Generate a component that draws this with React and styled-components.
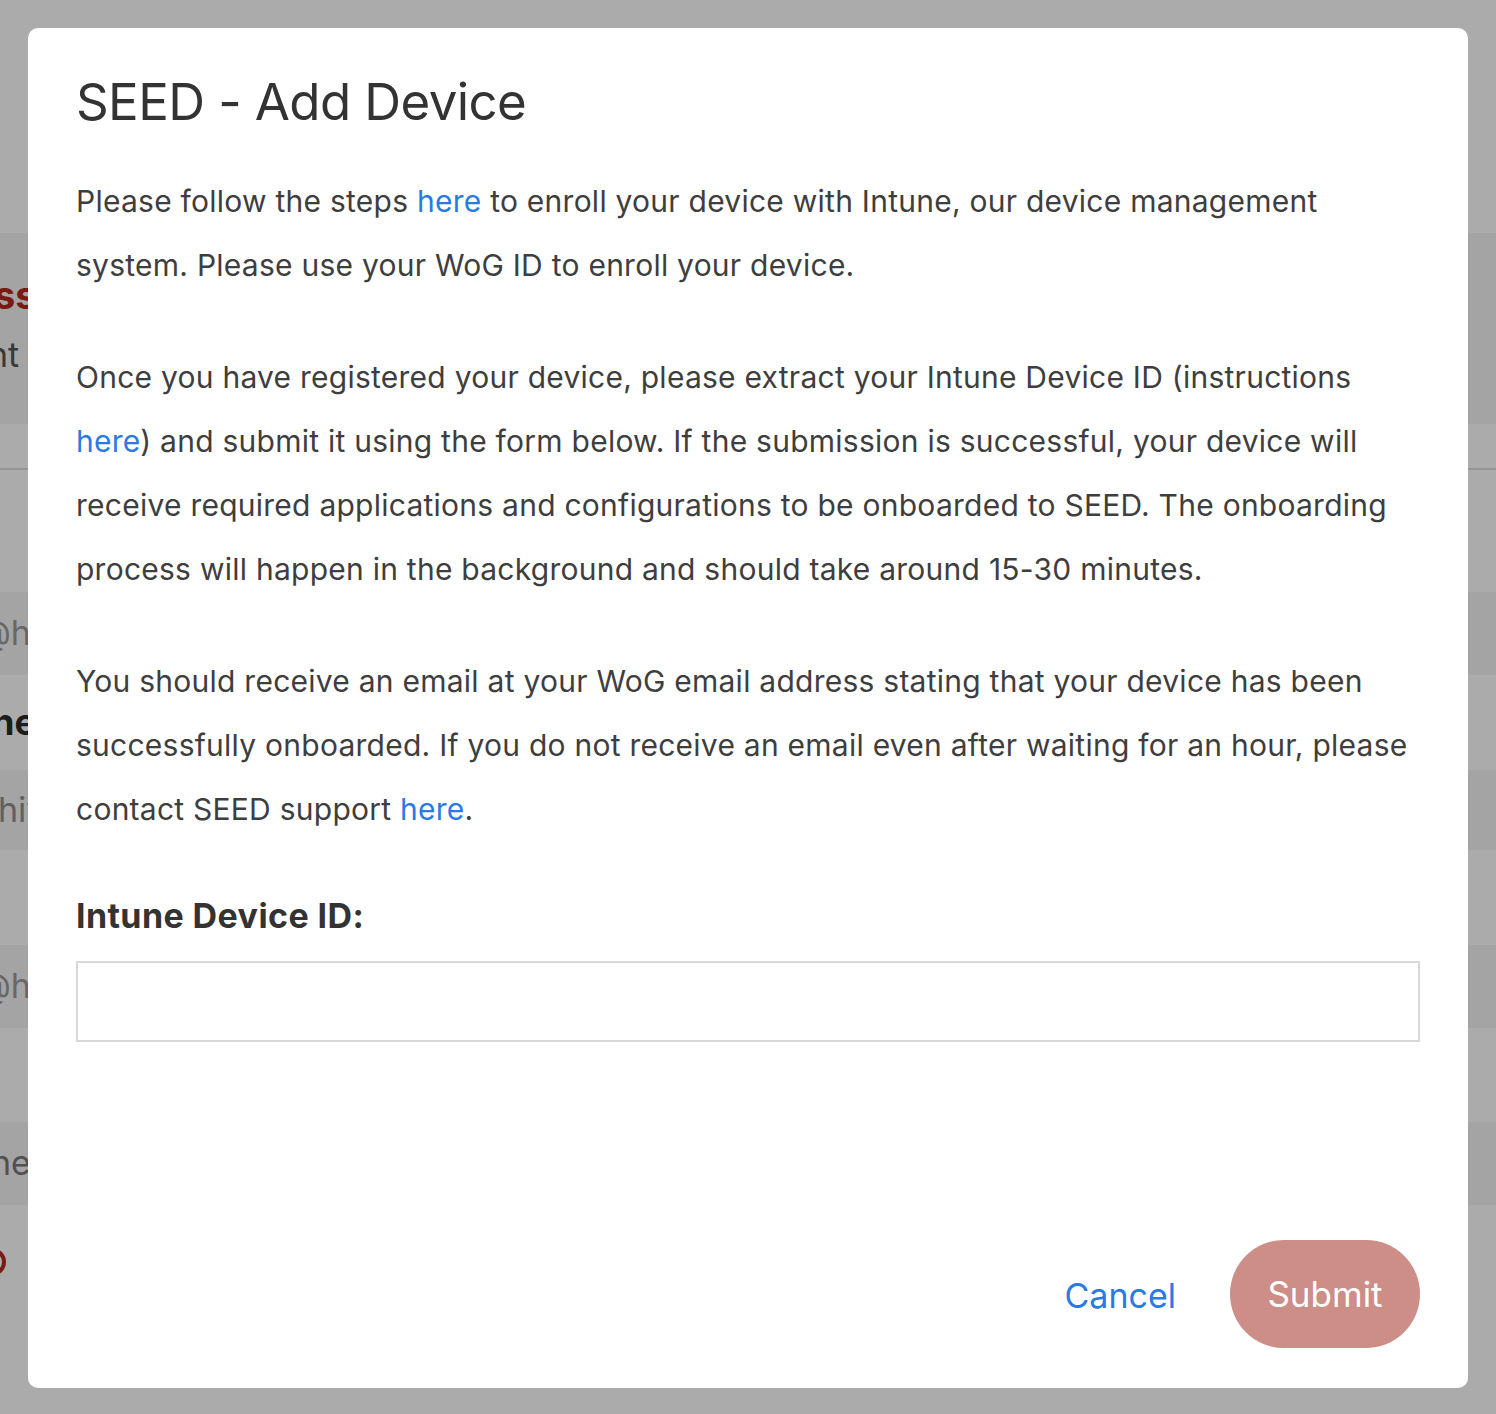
import React from "react";
import styled, { createGlobalStyle } from "styled-components";

const Global = createGlobalStyle`
  html, body { margin: 0; padding: 0; background: #ffffff; }
  body { font-family: Inter, "Noto Sans", "Liberation Sans", sans-serif; overflow: hidden; }
  * { box-sizing: border-box; }
`;

/* ---------- underlying page (seen through the overlay) ---------- */
const Page = styled.div`
  width: 100%;
  height: 1414px;
  display: flex;
  flex-direction: column;
  overflow: hidden;
`;

const Row = styled.div`
  height: ${(p) => p.$h}px;
  background: ${(p) => (p.$shade ? "#f5f5f5" : "#ffffff")};
  border-bottom: ${(p) => (p.$line ? "2px solid #dedede" : "none")};
  display: flex;
  flex-direction: column;
  justify-content: ${(p) => p.$justify || "center"};
  gap: ${(p) => p.$gap || 0}px;
  padding-top: ${(p) => p.$pt || 0}px;
  flex-shrink: 0;
`;

const CellText = styled.div`
  font-size: ${(p) => p.$size || 32}px;
  font-weight: ${(p) => (p.$bold ? 700 : 400)};
  color: ${(p) => p.$color || "#555"};
  margin-left: ${(p) => p.$indent || 0}px;
  white-space: nowrap;
  line-height: 1.2;
`;

const StatusMark = styled.div`
  width: 28px;
  height: 28px;
  border-radius: 50%;
  border: 4px solid #b8281d;
  margin-left: -22px;
`;

/* ---------- modal ---------- */
const Overlay = styled.div`
  position: fixed;
  inset: 0;
  background: rgba(0, 0, 0, 0.33);
  padding: 28px 28px 26px;
  display: flex;
`;

const Modal = styled.div`
  flex: 1;
  background: #ffffff;
  border-radius: 10px;
  display: flex;
  flex-direction: column;
  padding: 48px 48px 40px 48px;
`;

const Title = styled.h2`
  margin: 0 0 42px;
  font-size: 51px;
  font-weight: 400;
  line-height: 1;
  color: #333333;
  letter-spacing: -0.6px;
`;

const Para = styled.p`
  margin: 0 0 48px;
  font-size: 30px;
  line-height: 64px;
  color: #3e3e3e;
  white-space: nowrap;
  letter-spacing: 0.25px;
`;

const Link = styled.a`
  color: #2a7ae4;
  text-decoration: none;
`;

const Label = styled.label`
  display: block;
  margin: 7px 0 24px;
  font-size: 34px;
  font-weight: 700;
  color: #333333;
  line-height: 1.2;
  letter-spacing: 0.4px;
`;

const Input = styled.input`
  display: block;
  width: 100%;
  height: 81px;
  border: 2px solid #d8d8d8;
  border-radius: 0;
  outline: none;
  padding: 0 20px;
  font-size: 30px;
  font-family: inherit;
`;

const Footer = styled.div`
  margin-top: auto;
  display: flex;
  justify-content: flex-end;
  align-items: center;
  gap: 54px;
`;

const TextButton = styled.button`
  background: none;
  border: none;
  padding: 2px 0 0;
  font-family: inherit;
  font-size: 34px;
  color: #2a7ae4;
  cursor: pointer;
`;

const PillButton = styled.button`
  width: 190px;
  height: 108px;
  border: none;
  border-radius: 54px;
  background: #cd8e88;
  color: #ffffff;
  font-family: inherit;
  font-size: 35px;
  cursor: pointer;
`;

export default function App() {
  return (
    <>
      <Global />
      <Page>
        <Row $h={233} />
        <Row $h={191} $shade $justify="flex-start" $pt={40} $gap={16}>
          <CellText $bold $size={38} $color="#b8271c" $indent={-6}>ss Management</CellText>
          <CellText $size={34} $color="#555" $indent={-12}>nt to the</CellText>
        </Row>
        <Row $h={46} $line />
        <Row $h={122} />
        <Row $h={83} $shade>
          <CellText $size={34} $color="#9a9a9a" $indent={-22}>@hive.gov.sg</CellText>
        </Row>
        <Row $h={95}>
          <CellText $bold $size={36} $color="#2a2a2a" $indent={-8}>ned</CellText>
        </Row>
        <Row $h={80} $shade>
          <CellText $size={34} $color="#8f8f8f" $indent={-2}>hive</CellText>
        </Row>
        <Row $h={95} />
        <Row $h={83} $shade>
          <CellText $size={34} $color="#9a9a9a" $indent={-22}>@hive.gov.sg</CellText>
        </Row>
        <Row $h={94} />
        <Row $h={83} $shade>
          <CellText $size={34} $color="#7a7a7a" $indent={-9}>nec</CellText>
        </Row>
        <Row $h={120} $justify="flex-start" $pt={43}>
          <StatusMark />
        </Row>
      </Page>

      <Overlay>
        <Modal role="dialog" aria-labelledby="add-device-title">
          <Title id="add-device-title">SEED - Add Device</Title>
          <Para>
            Please follow the steps <Link href="#">here</Link> to enroll your device with Intune, our device management
            <br />
            system. Please use your WoG ID to enroll your device.
          </Para>
          <Para>
            Once you have registered your device, please extract your Intune Device ID (instructions
            <br />
            <Link href="#">here</Link>) and submit it using the form below. If the submission is successful, your device will
            <br />
            receive required applications and configurations to be onboarded to SEED. The onboarding
            <br />
            process will happen in the background and should take around 15-30 minutes.
          </Para>
          <Para>
            You should receive an email at your WoG email address stating that your device has been
            <br />
            successfully onboarded. If you do not receive an email even after waiting for an hour, please
            <br />
            contact SEED support <Link href="#">here</Link>.
          </Para>
          <Label htmlFor="intune-id">Intune Device ID:</Label>
          <Input id="intune-id" type="text" />
          <Footer>
            <TextButton type="button">Cancel</TextButton>
            <PillButton type="button">Submit</PillButton>
          </Footer>
        </Modal>
      </Overlay>
    </>
  );
}
